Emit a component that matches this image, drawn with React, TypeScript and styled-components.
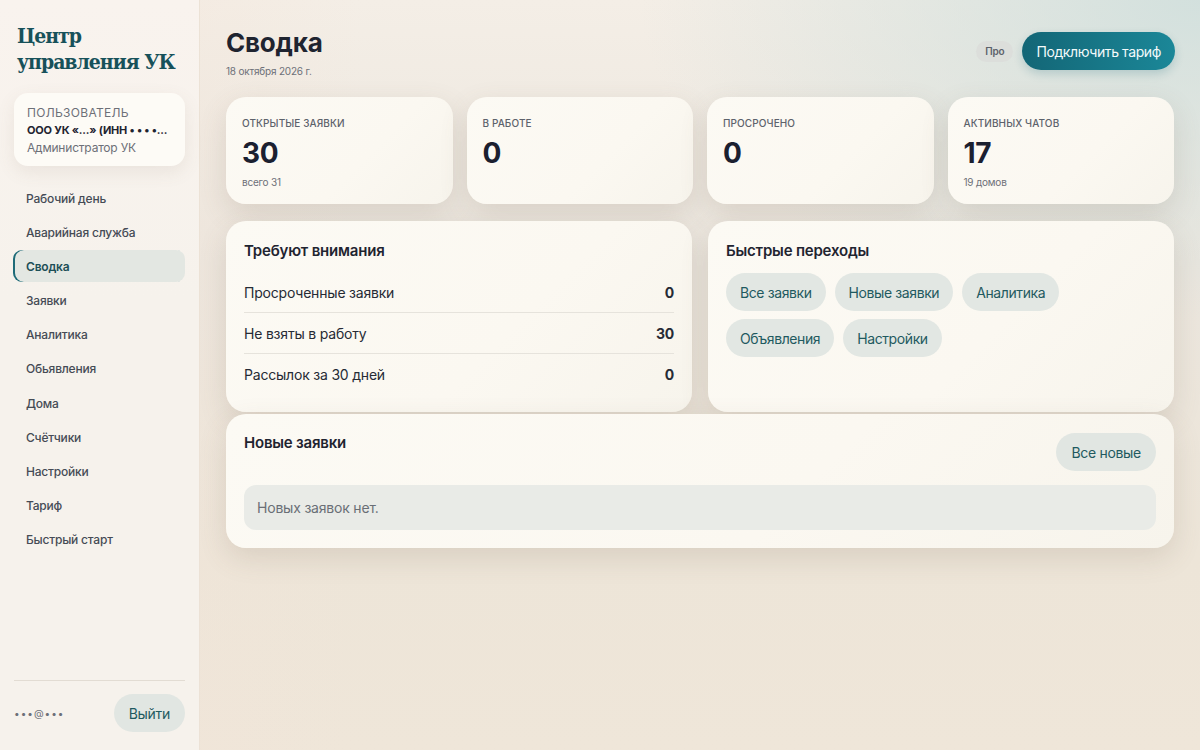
import * as React from 'react';
import styled, { createGlobalStyle } from 'styled-components';

const GlobalStyle = createGlobalStyle`
  html, body {
    margin: 0;
    padding: 0;
    height: 100%;
  }
  body {
    font-family: Inter, "Noto Sans", sans-serif;
    color: #1f2430;
    letter-spacing: -0.2px;
  }
  #root {
    height: 100%;
  }
  * {
    box-sizing: border-box;
  }
`;

const nav = [
  'Рабочий день',
  'Аварийная служба',
  'Сводка',
  'Заявки',
  'Аналитика',
  'Обьявления',
  'Дома',
  'Счётчики',
  'Настройки',
  'Тариф',
  'Быстрый старт',
];

const stats = [
  { label: 'Открытые заявки', value: '30', sub: 'всего 31' },
  { label: 'В работе', value: '0', sub: '' },
  { label: 'Просрочено', value: '0', sub: '' },
  { label: 'Активных чатов', value: '17', sub: '19 домов' },
];

const attention = [
  { label: 'Просроченные заявки', value: '0' },
  { label: 'Не взяты в работу', value: '30' },
  { label: 'Рассылок за 30 дней', value: '0' },
];

const quick = ['Все заявки', 'Новые заявки', 'Аналитика', 'Объявления', 'Настройки'];

const App: React.FC = () => (
  <>
    <GlobalStyle />
    <Layout>
      <Sidebar>
        <Brand>
          Центр
          <br />
          управления УК
        </Brand>
        <UserCard>
          <UserCaption>Пользователь</UserCaption>
          <UserName>ООО УК «...» (ИНН • • • •...</UserName>
          <UserRole>Администратор УК</UserRole>
        </UserCard>
        <Nav>
          {nav.map(item => (
            <NavItem key={item} active={item === 'Сводка'}>
              {item}
            </NavItem>
          ))}
        </Nav>
        <SidebarFooter>
          <Email>•••@•••</Email>
          <SoftButton>Выйти</SoftButton>
        </SidebarFooter>
      </Sidebar>

      <Main>
        <Header>
          <div>
            <Title>Сводка</Title>
            <DateText>18 октября 2026 г.</DateText>
          </div>
          <HeaderActions>
            <PlanBadge>Про</PlanBadge>
            <PrimaryButton>Подключить тариф</PrimaryButton>
          </HeaderActions>
        </Header>

        <StatsGrid>
          {stats.map(s => (
            <StatCard key={s.label}>
              <StatLabel>{s.label}</StatLabel>
              <StatValue>{s.value}</StatValue>
              <StatSub>{s.sub}</StatSub>
            </StatCard>
          ))}
        </StatsGrid>

        <TwoCols>
          <Panel>
            <PanelTitle>Требуют внимания</PanelTitle>
            <List>
              {attention.map(a => (
                <ListRow key={a.label}>
                  <span>{a.label}</span>
                  <RowValue>{a.value}</RowValue>
                </ListRow>
              ))}
            </List>
          </Panel>
          <Panel>
            <PanelTitle>Быстрые переходы</PanelTitle>
            <Chips>
              {quick.map(q => (
                <Chip key={q}>{q}</Chip>
              ))}
            </Chips>
          </Panel>
        </TwoCols>

        <WidePanel>
          <PanelHead>
            <PanelTitle>Новые заявки</PanelTitle>
            <SoftButton>Все новые</SoftButton>
          </PanelHead>
          <Empty>Новых заявок нет.</Empty>
        </WidePanel>
      </Main>
    </Layout>
  </>
);

export default App;

const Layout = styled.div`
  display: flex;
  height: 750px;
  overflow: hidden;
  background:
    radial-gradient(ellipse 560px 320px at 100% 0%, rgba(205, 222, 220, 0.85), rgba(205, 222, 220, 0) 100%),
    linear-gradient(90deg, rgba(243, 228, 216, 0.6) 0%, rgba(243, 228, 216, 0) 30%),
    linear-gradient(180deg, #f4eee6 0%, #ebe6de 35%, #ede5d8 75%, #efe6d9 100%);
`;

const Sidebar = styled.aside`
  width: 200px;
  flex-shrink: 0;
  display: flex;
  flex-direction: column;
  padding: 23px 14px 18px 13px;
  background: linear-gradient(180deg, #f9f3ee 0%, #f6f2ec 40%, #f6f2ec 100%);
  border-right: 1px solid #ece2d6;
`;

const Brand = styled.h1`
  margin: 0 0 0 4px;
  font-family: "DejaVu Serif Condensed", "DejaVu Serif", "Liberation Serif", serif;
  font-weight: 700;
  font-size: 21px;
  line-height: 26px;
  letter-spacing: -1px;
  white-space: nowrap;
  color: #17515a;
`;

const UserCard = styled.div`
  margin: 18px 0 0 1px;
  padding: 12px 13px 11px;
  background: #fdfbf6;
  border-radius: 14px;
  box-shadow: 0 6px 18px rgba(120, 100, 80, 0.1);
  display: flex;
  flex-direction: column;
  gap: 3px;
`;

const UserCaption = styled.div`
  font-size: 12px;
  letter-spacing: 0.3px;
  text-transform: uppercase;
  color: #6d7078;
`;

const UserName = styled.div`
  font-size: 11px;
  font-weight: 700;
  letter-spacing: -0.2px;
  color: #1f2430;
  white-space: nowrap;
`;

const UserRole = styled.div`
  font-size: 12px;
  color: #6d7078;
`;

const Nav = styled.nav`
  margin-top: 16px;
  display: flex;
  flex-direction: column;
  gap: 2.2px;
`;

const NavItem = styled.div<{ active?: boolean }>`
  height: 32px;
  display: flex;
  align-items: center;
  padding-left: 13px;
  font-size: 12px;
  font-weight: ${p => (p.active ? 600 : 500)};
  color: ${p => (p.active ? '#1d4f57' : '#454b55')};
  border-radius: 9px;
  background: ${p => (p.active ? '#e3e7e2' : 'transparent')};
  box-shadow: ${p => (p.active ? 'inset 2px 0 0 #1e6b78' : 'none')};
`;

const SidebarFooter = styled.div`
  margin-top: auto;
  margin-left: 1px;
  padding-top: 13px;
  border-top: 1px solid #e2dcd3;
  display: flex;
  align-items: center;
  justify-content: space-between;
`;

const Email = styled.span`
  font-size: 10px;
  color: #6d7078;
  letter-spacing: 1px;
`;

const SoftButton = styled.button`
  height: 38px;
  padding: 0 15px;
  border: none;
  border-radius: 19px;
  background: #e1e6e2;
  color: #1f5a60;
  font-family: inherit;
  font-size: 14px;
  letter-spacing: -0.3px;
`;

const Main = styled.main`
  flex: 1;
  padding: 28px 26px 0 26px;
  display: flex;
  flex-direction: column;
`;

const Header = styled.header`
  display: flex;
  justify-content: space-between;
  align-items: flex-start;
  margin-bottom: 20px;
`;

const Title = styled.h2`
  margin: 0;
  font-size: 26px;
  line-height: 30px;
  font-weight: 700;
  color: #1f2430;
`;

const DateText = styled.div`
  margin-top: 7px;
  font-size: 10px;
  color: #6d7078;
`;

const HeaderActions = styled.div`
  display: flex;
  align-items: center;
  gap: 9px;
  margin-top: 4px;
  margin-right: -1px;
`;

const PlanBadge = styled.span`
  height: 21px;
  padding: 0 9px;
  display: inline-flex;
  align-items: center;
  border-radius: 11px;
  background: #dcdedb;
  font-size: 10px;
  font-weight: 600;
  color: #5c626b;
`;

const PrimaryButton = styled.button`
  height: 38px;
  padding: 0 14px;
  border: none;
  border-radius: 19px;
  background: linear-gradient(90deg, #136676 0%, #1b8798 100%);
  color: #f3fafb;
  font-family: inherit;
  font-size: 14px;
  letter-spacing: -0.4px;
  box-shadow: 0 4px 10px rgba(20, 100, 115, 0.2);
`;

const cardSurface = `
  background: linear-gradient(135deg, #fcfaf4 0%, #fbf8f1 60%, #f7f4ec 100%);
  border-radius: 20px;
  box-shadow: 0 10px 28px rgba(110, 95, 75, 0.16);
`;

const StatsGrid = styled.div`
  display: grid;
  grid-template-columns: repeat(4, 1fr);
  gap: 14px;
`;

const StatCard = styled.div`
  ${cardSurface}
  height: 107px;
  padding: 20px 16px 0;
`;

const StatLabel = styled.div`
  font-size: 10px;
  font-weight: 500;
  letter-spacing: 0.1px;
  text-transform: uppercase;
  color: #5d626b;
`;

const StatValue = styled.div`
  margin-top: 7px;
  font-size: 28px;
  line-height: 34px;
  font-weight: 700;
  color: #1b2030;
`;

const StatSub = styled.div`
  margin-top: 6px;
  font-size: 10px;
  color: #6d7078;
`;

const TwoCols = styled.div`
  margin-top: 17px;
  display: grid;
  grid-template-columns: 1fr 1fr;
  gap: 16px;
`;

const Panel = styled.section`
  ${cardSurface}
  height: 191px;
  padding: 20px 18px;
`;

const PanelTitle = styled.h3`
  margin: 0;
  font-size: 15px;
  line-height: 20px;
  font-weight: 600;
  color: #1f2430;
`;

const List = styled.div`
  margin-top: 11px;
`;

const ListRow = styled.div`
  height: 41px;
  display: flex;
  align-items: center;
  justify-content: space-between;
  font-size: 14px;
  color: #262b35;
  border-bottom: 1px solid #e6e3dc;
  &:last-child {
    border-bottom: none;
  }
`;

const RowValue = styled.span`
  font-weight: 700;
`;

const Chips = styled.div`
  margin-top: 12px;
  display: flex;
  flex-wrap: wrap;
  gap: 8px 9px;
`;

const Chip = styled.span`
  height: 38px;
  padding: 0 14px;
  display: inline-flex;
  align-items: center;
  border-radius: 19px;
  background: #e2e7e3;
  color: #1f5a60;
  font-size: 14px;
  letter-spacing: -0.4px;
`;

const WidePanel = styled.section`
  ${cardSurface}
  margin-top: 2px;
  padding: 19px 18px 18px;
`;

const PanelHead = styled.div`
  display: flex;
  justify-content: space-between;
  align-items: flex-start;
`;

const Empty = styled.div`
  margin-top: 14px;
  height: 45px;
  padding: 0 13px;
  display: flex;
  align-items: center;
  border-radius: 12px;
  background: #e9ebe7;
  font-size: 14px;
  color: #6a6f76;
`;
